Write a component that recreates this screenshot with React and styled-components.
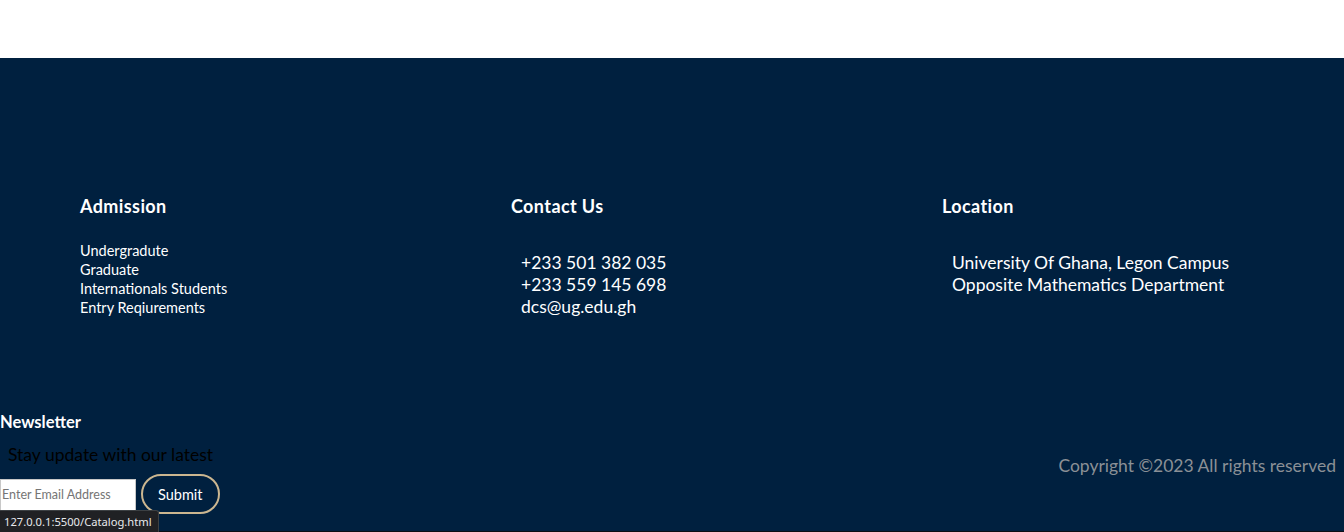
import React from 'react';
import styled, { createGlobalStyle } from 'styled-components';

const GlobalStyle = createGlobalStyle`
  html, body {
    margin: 0;
    padding: 0;
    background: #fff;
    font-family: 'Lato', 'Noto Sans', sans-serif;
  }
  * {
    box-sizing: border-box;
  }
`;

const columns = [
  {
    title: 'Admission',
    small: true,
    items: ['Undergradute', 'Graduate', 'Internationals Students', 'Entry Reqiurements'],
  },
  {
    title: 'Contact Us',
    items: ['+233 501 382 035', '+233 559 145 698', 'dcs@ug.edu.gh'],
  },
  {
    title: 'Location',
    items: ['University Of Ghana, Legon Campus', 'Opposite Mathematics Department'],
  },
];

const App = () => {
  return (
    <>
      <GlobalStyle />
      <Page>
        <TopSpace />
        <Footer>
          <Columns>
            {columns.map((col) => (
              <Column key={col.title}>
                <Heading>{col.title}</Heading>
                <List $small={col.small}>
                  {col.items.map((item) => (
                    <li key={item}>{item}</li>
                  ))}
                </List>
              </Column>
            ))}
          </Columns>
          <BottomRow>
            <Newsletter>
              <NewsTitle>Newsletter</NewsTitle>
              <NewsText>Stay update with our latest</NewsText>
              <Form onSubmit={(e) => e.preventDefault()}>
                <EmailInput type='email' placeholder='Enter Email Address' />
                <SubmitButton type='submit'>Submit</SubmitButton>
              </Form>
            </Newsletter>
            <Copyright>Copyright ©2023 All rights reserved</Copyright>
          </BottomRow>
        </Footer>
        <StatusBar>127.0.0.1:5500/Catalog.html</StatusBar>
      </Page>
    </>
  );
};

export default App;

const Page = styled.div`
  width: 100%;
  height: 532px;
  overflow: hidden;
  position: relative;
`;

const TopSpace = styled.div`
  height: 58px;
  background: #fff;
`;

const Footer = styled.footer`
  background: #00203f;
  height: 474px;
  padding-top: 138px;
  border-bottom: 1px solid #0b0f14;
`;

const Columns = styled.div`
  display: grid;
  grid-template-columns: repeat(3, 431px);
  padding-left: 80px;
`;

const Column = styled.div`
  display: flex;
  flex-direction: column;
`;

const Heading = styled.h3`
  margin: 0;
  color: #fff;
  font-size: 18px;
  font-weight: 700;
  letter-spacing: 0.4px;
  line-height: 20px;
`;

const List = styled.ul`
  list-style: none;
  margin: 0;
  padding: 0;
  color: #fff;
  margin-top: ${(p) => (p.$small ? '25px' : '36px')};
  padding-left: ${(p) => (p.$small ? '0' : '10px')};
  font-size: ${(p) => (p.$small ? '14.5px' : '17.5px')};
  line-height: ${(p) => (p.$small ? '19px' : '22px')};
`;

const BottomRow = styled.div`
  display: flex;
  justify-content: space-between;
  align-items: center;
  margin-top: 94px;
  padding-right: 8px;
`;

const Newsletter = styled.div`
  display: flex;
  flex-direction: column;
`;

const NewsTitle = styled.h4`
  margin: 0;
  color: #fff;
  font-size: 16.5px;
  font-weight: 700;
  line-height: 20px;
`;

const NewsText = styled.p`
  margin: 12px 0 0 8px;
  color: #000;
  font-size: 17.5px;
  line-height: 22px;
`;

const Form = styled.form`
  display: flex;
  align-items: center;
  gap: 5px;
  margin-top: 8px;
`;

const EmailInput = styled.input`
  width: 136px;
  height: 32px;
  margin-top: 1px;
  border: 1px solid #c8c8c8;
  background: #fff;
  padding: 0 0 0 1px;
  font-family: inherit;
  font-size: 12.5px;
  color: #333;
  outline: none;

  &::placeholder {
    color: #757575;
  }
`;

const SubmitButton = styled.button`
  height: 40px;
  padding: 0 15px;
  border-radius: 20px;
  border: 2px solid #cbb690;
  background: transparent;
  color: #fff;
  font-family: inherit;
  font-size: 14.5px;
  cursor: pointer;
`;

const Copyright = styled.p`
  margin: 0;
  padding-top: 4px;
  color: #8b9096;
  font-size: 17.5px;
`;

const StatusBar = styled.div`
  position: absolute;
  left: 0;
  bottom: 0;
  height: 22px;
  padding: 0 6px 0 4px;
  background: #202124;
  border-top: 1px solid #3c4043;
  border-right: 1px solid #3c4043;
  border-top-right-radius: 3px;
  color: #e8eaed;
  font-family: 'Noto Sans', sans-serif;
  font-size: 11.2px;
  line-height: 21px;
`;
